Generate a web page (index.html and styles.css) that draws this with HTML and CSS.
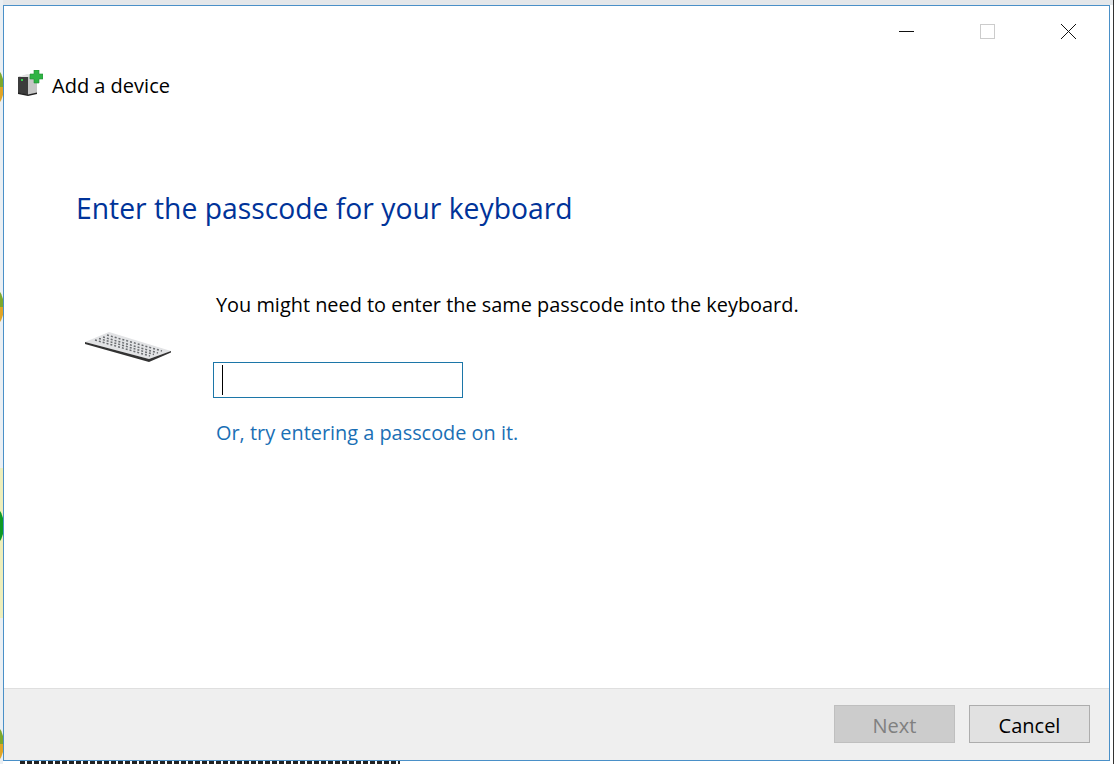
FILE: index.html
```html
<!DOCTYPE html>
<html lang="en">
<head>
    <meta charset="UTF-8">
    <title>Add a device</title>
    <link rel="stylesheet" href="styles.css">
</head>
<body>
    <!-- what shows of the desktop behind the window -->
    <div class="top-strip"></div>
    <div class="left-strip"></div>
    <div class="blob blob-a"></div>
    <div class="blob blob-b"></div>
    <div class="pale-strip"></div>
    <div class="blob-green"></div>
    <div class="blob blob-c"></div>
    <div class="behind-text"></div>
    <div class="behind-edge"></div>

    <div class="window">
        <div class="title-buttons">
            <svg class="win-btn" width="15" height="15" viewBox="0 0 15 15"><path d="M0 7.500H15" stroke="#111" fill="none"/></svg>
            <svg class="win-btn" width="15" height="15" viewBox="0 0 15 15"><rect x="0.500" y="0.500" width="14" height="14" stroke="#ccc" fill="none"/></svg>
            <svg class="win-btn" width="15" height="15" viewBox="0 0 15 15"><path d="M0 0L15 15M15 0L0 15" stroke="#111" fill="none"/></svg>
        </div>

        <div class="wizard-title">
            <svg class="device-icon" width="26" height="26" viewBox="0 0 26 26">
                <path d="M1 7L11 5V25L1 23Z" fill="#3c3c3c"/>
                <path d="M11 5L20 6V23L11 25Z" fill="#c6c6c6"/>
                <path d="M1 7L10 4L20 6L11 7Z" fill="#e2e2e2"/>
                <path d="M1 22.500L11 24.500L20 22.500V24L11 26L1 24Z" fill="#222"/>
                <rect x="4" y="9" width="2" height="2" fill="#35d04a"/>
                <path d="M17 0H22V4H26V9H22V13H17V9H13V4H17Z" fill="#2fb344" stroke="#1f8f33" stroke-width="0.600"/>
            </svg>
            <span class="wizard-name">Add a device</span>
        </div>

        <div class="content">
            <h1>Enter the passcode for your keyboard</h1>
            <div class="passcode-row">
                <svg class="keyboard" width="88" height="34" viewBox="85 330 88 34">
                    <path d="M86 342L110 332L172 351L150 359Z" fill="#e2e3e5"/>
                    <path d="M86 342L150 359L172 351L172 352.500L150 362L86 344Z" fill="#333"/>
                    <g fill="none" stroke="#6a6d70" stroke-width="1.500" stroke-dasharray="2 2">
                        <path d="M108 335L163 351"/>
                        <path d="M104 337L159 353"/>
                        <path d="M100 338.500L155 354.500"/>
                        <path d="M96 340L151 356"/>
                    </g>
                </svg>
                <div class="passcode-form">
                    <p class="hint">You might need to enter the same passcode into the keyboard.</p>
                    <div class="code-box"><span class="caret"></span></div>
                    <a class="alt-link" href="#">Or, try entering a passcode on it.</a>
                </div>
            </div>
        </div>

        <div class="footer">
            <button class="btn btn-disabled" disabled>Next</button>
            <button class="btn">Cancel</button>
        </div>
    </div>
</body>
</html>
```

FILE: styles.css
```css
html, body {
    margin: 0;
    height: 770px;
    overflow: hidden;
}

body {
    position: relative;
    background: #fff;
    font-family: "Open Sans", "Noto Sans", sans-serif;
    color: #000;
}

/* Desktop behind the window */
.top-strip {
    position: absolute;
    left: 0;
    top: 0;
    width: 1114px;
    height: 5px;
    background: #e4e7ea;
}

.left-strip {
    position: absolute;
    left: 0;
    top: 0;
    width: 3px;
    height: 764px;
    background: #eaeff3;
}

.blob {
    position: absolute;
    left: -14px;
    width: 18px;
    height: 36px;
    border-radius: 50%;
    background: linear-gradient(#7da82c 50%, #e0a526 50%);
}

.blob-a { top: 69px; }
.blob-b { top: 289px; }
.blob-c { top: 726px; }

.pale-strip {
    position: absolute;
    left: 0;
    top: 468px;
    width: 3px;
    height: 150px;
    background: #eeeebb;
}

.blob-green {
    position: absolute;
    left: -14px;
    top: 508px;
    width: 18px;
    height: 36px;
    border-radius: 50%;
    background: #0d9a24;
}

.behind-text {
    position: absolute;
    left: 20px;
    top: 761px;
    width: 380px;
    height: 3px;
    background: repeating-linear-gradient(to right, #222 0 5px, #fff 5px 7px);
}

.behind-edge {
    position: absolute;
    left: 1113px;
    top: 0;
    width: 1px;
    height: 764px;
    background: #333;
}

/* Window */
.window {
    position: absolute;
    left: 3px;
    top: 5px;
    width: 1105px;
    height: 754px;
    display: flex;
    flex-direction: column;
    background: #fff;
    border: 1px solid #4a90c8;
}

.title-buttons {
    display: flex;
    justify-content: flex-end;
    gap: 66px;
    padding: 18px 33px 0 0;
    height: 15px;
}

.win-btn {
    display: block;
}

.wizard-title {
    display: flex;
    align-items: flex-start;
    gap: 9px;
    height: 26px;
    margin-top: 31px;
    padding-left: 13px;
    font-size: 20px;
    line-height: 26px;
}

.wizard-name {
    padding-top: 3px;
}

.content {
    flex: 1;
    padding-left: 72px;
}

h1 {
    margin: 0;
    padding-top: 92px;
    font-size: 28.3px;
    font-weight: 400;
    line-height: 40px;
    color: #003399;
}

.passcode-row {
    display: flex;
    align-items: flex-start;
    margin-top: 63px;
}

.keyboard {
    display: block;
    margin: 39px 41px 0 8px;
    flex-shrink: 0;
}

.hint {
    margin: 0 0 0 3px;
    font-size: 19.9px;
    line-height: 28px;
}

.code-box {
    width: 240px;
    height: 34px;
    margin-top: 43px;
    border: 1px solid #1c76a8;
    display: flex;
    align-items: center;
    padding-left: 8px;
}

.caret {
    width: 1px;
    height: 30px;
    background: #000;
}

.alt-link {
    display: block;
    margin: 21px 0 0 3px;
    font-size: 19.9px;
    line-height: 28px;
    color: #1a6fb5;
    text-decoration: none;
}

.footer {
    display: flex;
    justify-content: flex-end;
    gap: 14px;
    height: 72px;
    padding: 16px 19px 0 0;
    box-sizing: border-box;
    background: #efefef;
    border-top: 1px solid #dfdfdf;
}

.btn {
    width: 121px;
    height: 38px;
    font-family: inherit;
    font-size: 20px;
    color: #000;
    background: #e1e1e1;
    border: 1px solid #adadad;
    padding: 2px 0 0;
}

.btn-disabled {
    color: #808080;
    background: #cccccc;
    border-color: #bfbfbf;
}
```
